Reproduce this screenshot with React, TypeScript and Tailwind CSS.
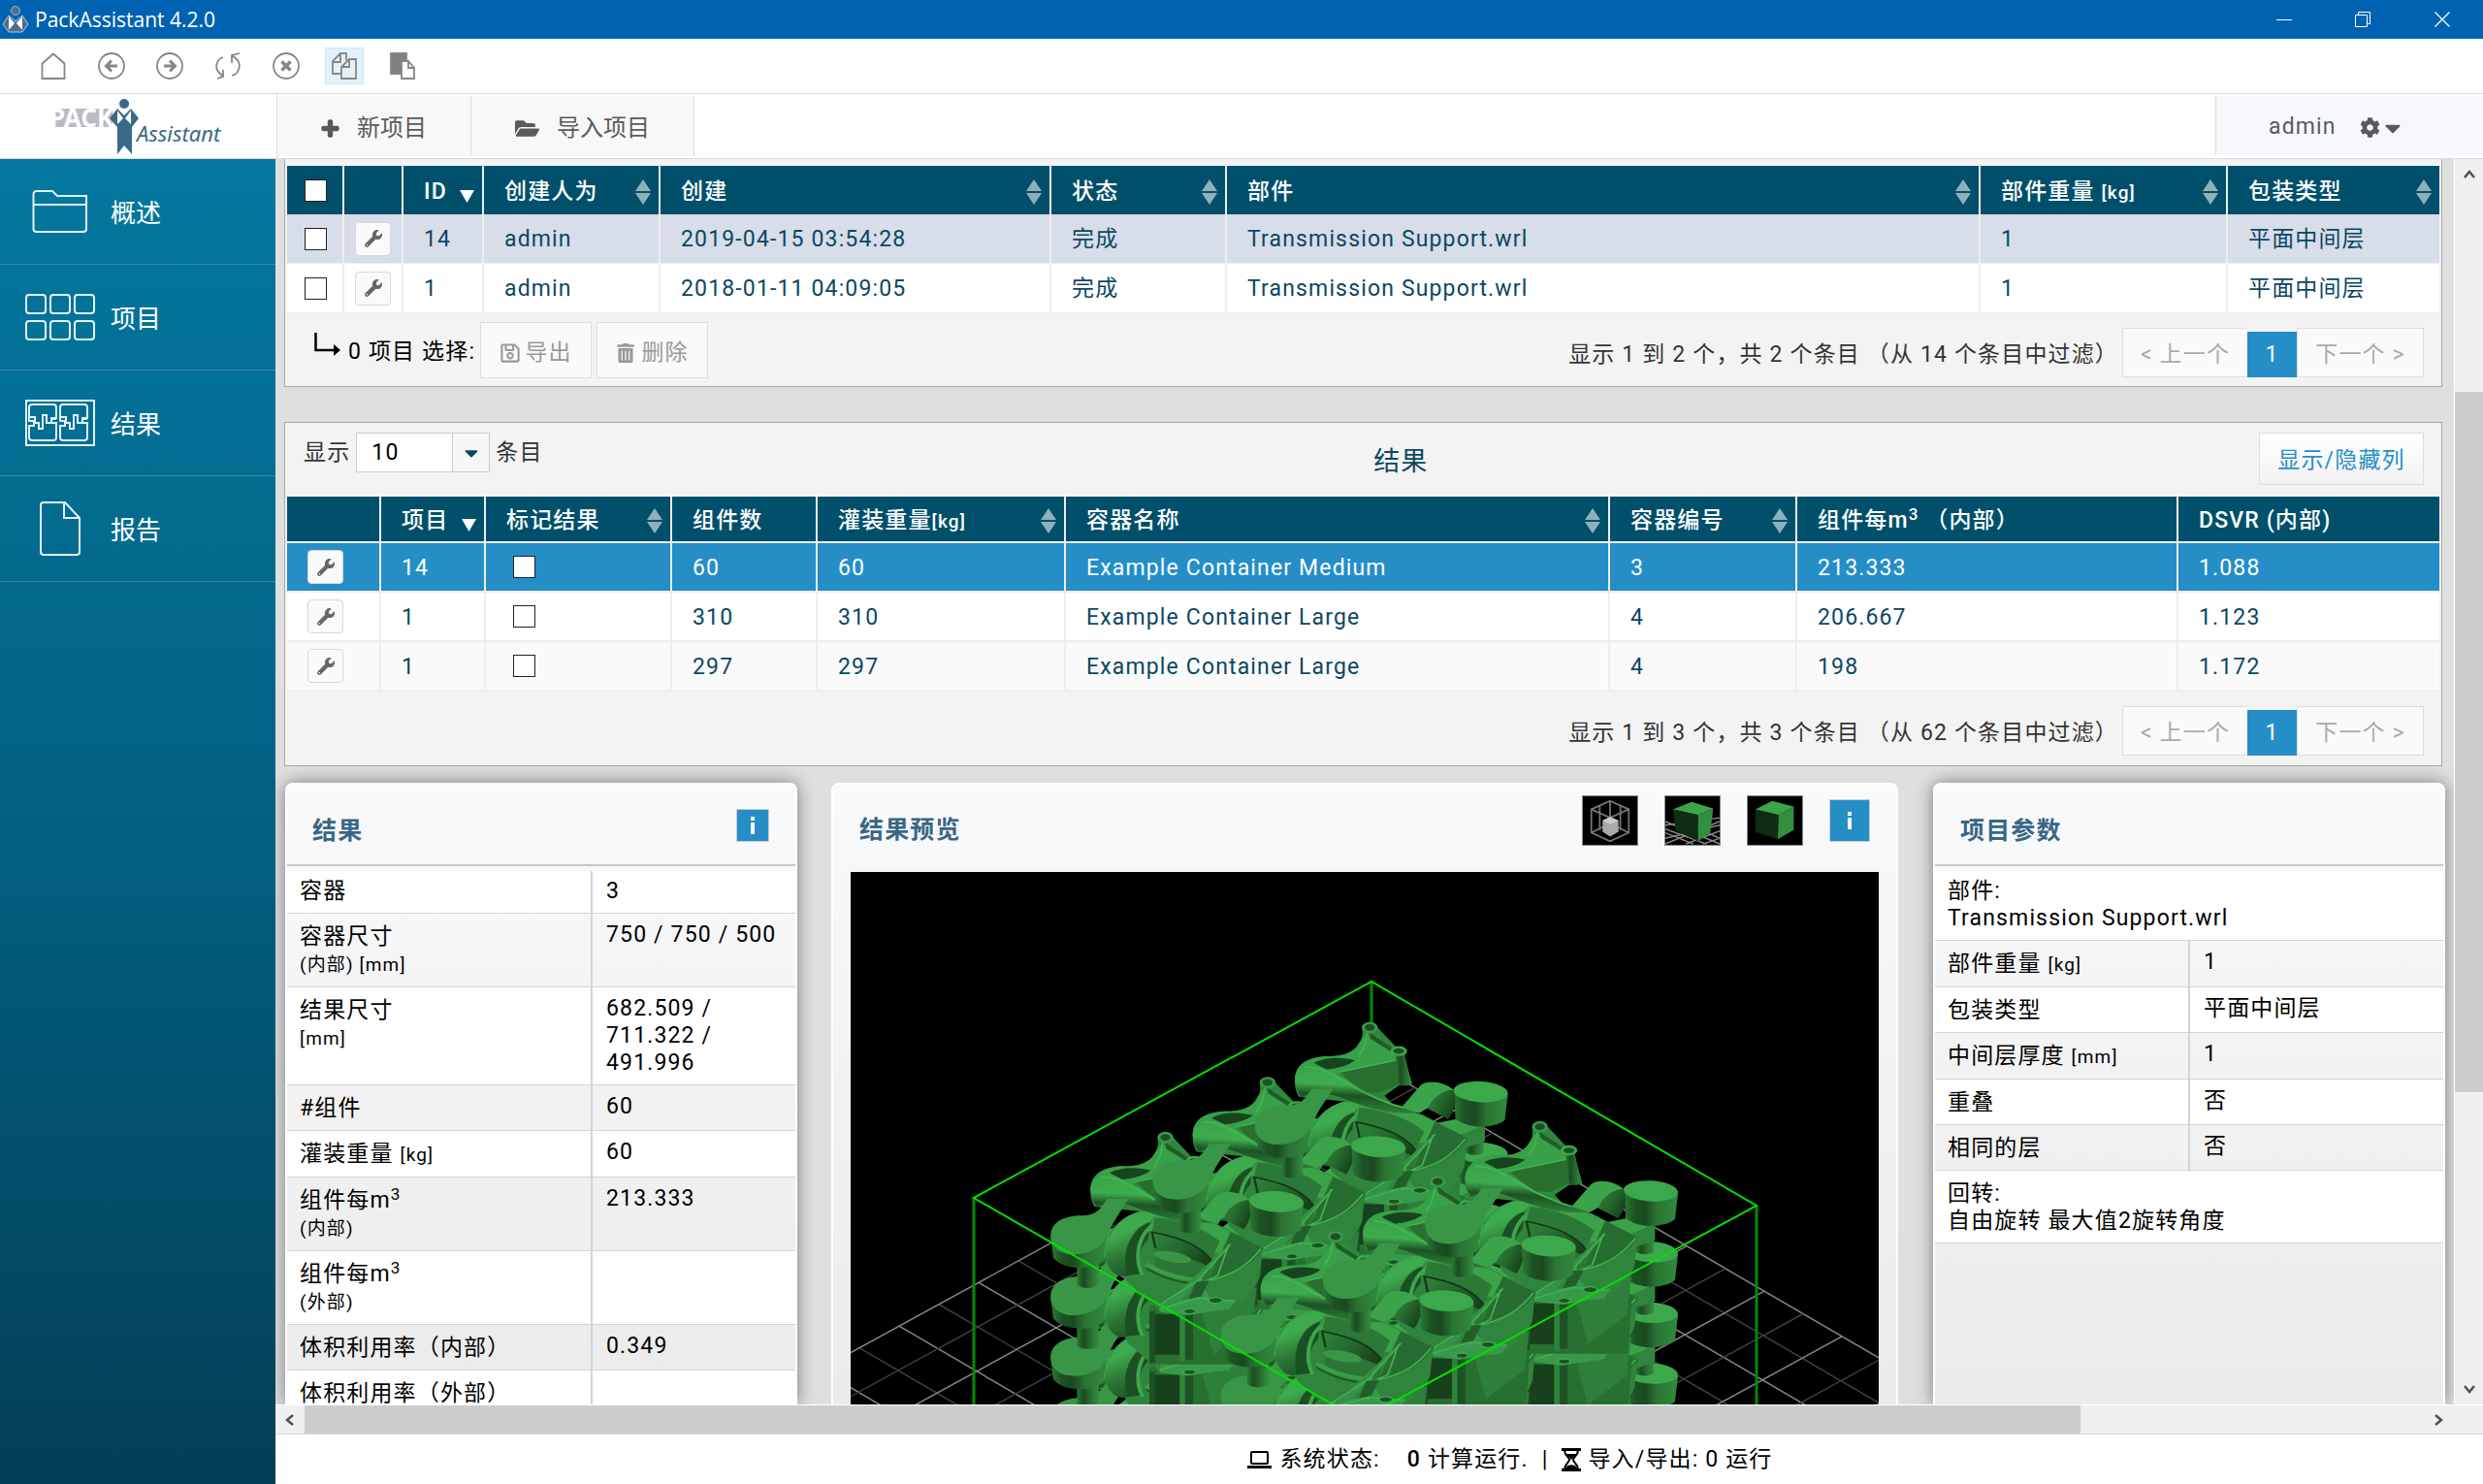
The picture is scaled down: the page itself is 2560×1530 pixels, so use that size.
import type { ReactNode } from "react";
import { FaWrench, FaPlus, FaFolderOpen, FaCog, FaCaretDown, FaRegSave, FaTrashAlt } from "react-icons/fa";

const FONT = "font-['Roboto','Noto_Sans_CJK_SC',sans-serif]";

/* ---------- window chrome ---------- */

function TitleBar() {
  return (
    <header className="flex h-10 shrink-0 items-center bg-[#0063b1] text-white">
      <svg viewBox="0 0 28 28" className="ml-0.5 h-7 w-7">
        <circle cx="14" cy="5" r="4.5" fill="#4e6f8e" stroke="#9db4c8" />
        <path d="M7 10 14 16l7-6 6 9-6 8H7l-6-8z" fill="#4e6f8e" stroke="#b9cad8" />
        <path d="M7 11v14l6-7zM21 11v14l-6-7z" fill="#fff" />
      </svg>
      <span className="ml-1.5 font-['Open_Sans',sans-serif] text-[21px] leading-7">PackAssistant 4.2.0</span>
      <div className="ml-auto flex h-full">
        <button aria-label="最小化" className="flex w-[81px] items-center justify-center">
          <svg width="16" height="16" viewBox="0 0 16 16" stroke="#fff"><path d="M0 8.500h16" /></svg>
        </button>
        <button aria-label="还原" className="flex w-[81px] items-center justify-center">
          <svg width="16" height="16" viewBox="0 0 16 16" stroke="#fff" fill="none"><path d="M.5 3.500h12v12H.5zM3.500 3.500v-3h12v12h-3" /></svg>
        </button>
        <button aria-label="关闭" className="flex w-[84px] items-center justify-center">
          <svg width="16" height="16" viewBox="0 0 16 16" stroke="#fff" strokeWidth="1.300"><path d="M.5.5l15 15M15.500.5l-15 15" /></svg>
        </button>
      </div>
    </header>
  );
}

const toolIcons: { label: string; active?: boolean; art: ReactNode }[] = [
  { label: "主页", art: <path d="M2.500 11.500 14 1.500l11.500 10V27h-23z" /> },
  { label: "后退", art: <><circle cx="14" cy="14" r="13" /><path d="M20 14H9M14 8.500 8.500 14l5.500 5.500" strokeWidth="3" /></> },
  { label: "前进", art: <><circle cx="14" cy="14" r="13" /><path d="M8 14h11M14 8.500l5.500 5.500-5.500 5.500" strokeWidth="3" /></> },
  { label: "刷新", art: <path d="M9 5C3 7 0 14 4 20l5 5M9 18v7l-6 2M18 24c8-2 10-12 5-17l-5-4M26 1l-8 2v8" /> },
  { label: "停止", art: <><circle cx="14" cy="14" r="13" /><path d="M9.500 9.500l9 9M18.500 9.500l-9 9" strokeWidth="3.500" /></> },
  { label: "复制", active: true, art: <path d="M11 22H2V9l8-8h6v7M2 10h8V1M11 27V15l8-8h7v20zM11 15h8V7" /> },
  { label: "粘贴", art: <><path d="M2 1h16v7h-5v14H2z" fill="#808080" /><path d="M13 9h7l6 7v11H13zM20 9v7h6" fill="#fff" /></> },
];

function ToolBar() {
  return (
    <nav className="flex h-[57px] shrink-0 items-center border-b border-[#d9d9d9] bg-white pl-[35px]">
      {toolIcons.map((t) => (
        <button
          key={t.label}
          aria-label={t.label}
          className={`mr-5 flex h-[38px] w-10 items-center justify-center ${t.active ? "border border-[#cbe6fa] bg-[#e3f1fc]" : ""}`}
        >
          <svg viewBox="0 0 28 28" className="h-7 w-7" fill="none" stroke="#868686" strokeWidth="1.800">{t.art}</svg>
        </button>
      ))}
    </nav>
  );
}

function Logo() {
  return (
    <div className="flex h-full w-[286px] items-center justify-center border-r border-[#dcdcdc] bg-white">
      <svg viewBox="0 0 180 60" className="h-[60px] w-[180px]" aria-label="PACK Assistant">
        <rect x="1" y="12" width="62" height="19" fill="#b9bcc6" />
        <text x="-2" y="31" fill="#fff" fontFamily="Noto Sans" fontWeight="700" fontSize="26">PACK</text>
        <circle cx="75" cy="7" r="5" fill="#3a6a87" />
        <path d="M68 12l7 7 7-7 8 10-7 9v28l-8-9-7 9V31l-8-9z" fill="#3a6a87" />
        <path d="M68 14v14l6-6zM82 14v14l-6-6z" fill="#fff" />
        <text x="88" y="46" fill="#3a6a87" fontFamily="Noto Sans" fontStyle="italic" fontSize="22">Assistant</text>
      </svg>
    </div>
  );
}

function HeaderBar() {
  return (
    <div className="flex h-[67px] shrink-0 items-start border-b border-[#d9d9d9] bg-white text-2xl text-[#5a5a5a]">
      <Logo />
      <button className="mt-0.5 flex h-[62px] w-[200px] items-center justify-center gap-[18px] border-r border-[#dcdcdc] bg-[#f8f8f8] pt-1">
        <FaPlus size={19} stroke="currentColor" strokeWidth="50" />新项目
      </button>
      <button className="mt-0.5 flex h-[62px] w-[230px] items-center justify-center gap-[18px] border-r border-[#dcdcdc] bg-[#f8f8f8] pt-1">
        <FaFolderOpen size={25} />导入项目
      </button>
      <button className="mt-0.5 ml-auto flex h-[61px] w-[276px] items-center border-l border-[#dcdcdc] bg-[#f6f8fc] pt-1 pl-[54px] text-[23px] tracking-wider">
        admin
        <FaCog size={21} className="ml-6" />
        <FaCaretDown size={26} />
      </button>
    </div>
  );
}

/* ---------- sidebar ---------- */

const piece = "M7 5h22a3 3 0 0 1 3 3v11h-5v5h5v15a3 3 0 0 1-3 3H7a3 3 0 0 1-3-3V27h5v-5H4V8a3 3 0 0 1 3-3z";
const zigzag = "M5 18h5v6h4v6h4V16h4v8h5v-4h5";
const sideItems: { label: string; icon: ReactNode }[] = [
  {
    label: "概述",
    icon: <svg width="58" height="44" viewBox="0 0 58 44"><path d="M1.500 40V4a3 3 0 0 1 3-3H21l5 5h30v34a3 3 0 0 1-3 3H4.500a3 3 0 0 1-3-3zM2 15h54" /></svg>,
  },
  {
    label: "项目",
    icon: (
      <svg width="72" height="48" viewBox="0 0 72 48">
        {[1, 26, 51].map((x) => [1, 28].map((y) => <rect key={`${x}-${y}`} x={x} y={y} width="20" height="19" rx="3" />))}
      </svg>
    ),
  },
  {
    label: "结果",
    icon: (
      <svg width="72" height="48" viewBox="0 0 72 48">
        <rect x="1" y="1" width="70" height="46" />
        <path d={piece} /><path d={piece} transform="translate(32 0)" />
        <path d={zigzag} /><path d={zigzag} transform="translate(32 0)" />
      </svg>
    ),
  },
  {
    label: "报告",
    icon: <svg width="42" height="56" viewBox="0 0 42 56"><path d="M1 52V4a3 3 0 0 1 3-3h22l15 16v35a3 3 0 0 1-3 3H4a3 3 0 0 1-3-3zM25 1v16h16" /></svg>,
  },
];

function SideBar() {
  return (
    <aside className="w-[284px] shrink-0 bg-gradient-to-b from-[#04789f] via-[#026183] to-[#033f56]">
      {sideItems.map((s) => (
        <a key={s.label} href="#" className="flex h-[109px] items-center border-b border-[#3a87a5] pl-[26px] text-[26px] text-white">
          <span className="flex w-[72px] justify-center [&_svg]:fill-none [&_svg]:stroke-[#e0f2f8] [&_svg]:stroke-2">{s.icon}</span>
          <span className="ml-4 pt-1">{s.label}</span>
        </a>
      ))}
    </aside>
  );
}

/* ---------- tables ---------- */

function Check({ label }: { label: string }) {
  return <input type="checkbox" aria-label={label} className="block h-[23px] w-[23px] appearance-none border border-[#222] bg-white" />;
}

function WrenchButton() {
  return (
    <button aria-label="操作" className="flex h-[35px] w-[37px] items-center justify-center rounded border border-[#d8d8d8] bg-[#fafafa] text-[#666]">
      <FaWrench size={18} />
    </button>
  );
}

function SortArrows() {
  return (
    <svg width="16" height="26" viewBox="0 0 16 26" fill="#8fb0bb" className="shrink-0"><path d="M8 0l8 12H0zM8 26l8-12H0z" /></svg>
  );
}

type Col = { title: ReactNode; width: string; sort?: "both" | "desc" };

function HeadCell({ col }: { col: Col }) {
  return (
    <th scope="col" className="border-r-2 border-[#eee] bg-[#00506b] pt-1 pr-2 pb-0 pl-[21px] text-left font-medium text-white last:border-r-0">
      <span className="flex items-center justify-between whitespace-nowrap">
        <span>{col.title}</span>
        {col.sort === "both" && <SortArrows />}
        {col.sort === "desc" && <svg width="15" height="13" viewBox="0 0 15 13" className="mt-2 shrink-0" fill="#fff"><path d="M0 0h15L7.500 13z" /></svg>}
      </span>
    </th>
  );
}

const unit = (s: string) => <span className="text-[19px]">{s}</span>;

const projectCols: Col[] = [
  { title: <Check label="全选" />, width: "w-[59px]" },
  { title: "", width: "w-[61px]" },
  { title: "ID", width: "w-[83px]", sort: "desc" },
  { title: "创建人为", width: "w-[182px]", sort: "both" },
  { title: "创建", width: "w-[403px]", sort: "both" },
  { title: "状态", width: "w-[181px]", sort: "both" },
  { title: "部件", width: "w-auto", sort: "both" },
  { title: <>部件重量 {unit("[kg]")}</>, width: "w-[255px]", sort: "both" },
  { title: "包装类型", width: "w-[218px]", sort: "both" },
];

const projects = [
  ["14", "admin", "2019-04-15 03:54:28", "完成", "Transmission Support.wrl", "1", "平面中间层"],
  ["1", "admin", "2018-01-11 04:09:05", "完成", "Transmission Support.wrl", "1", "平面中间层"],
];

function Pager({ text }: { text: string }) {
  return (
    <div className="flex items-center text-[#333]">
      <span className="mr-1 pt-1 whitespace-nowrap">{text}</span>
      <button className="h-[51px] w-[129px] border border-r-0 border-[#ddd] bg-[#fafafa] pt-1 text-[#aaa]">&lt; 上一个</button>
      <button className="mt-1 h-[47px] w-[51px] bg-[#258ec7] text-white">1</button>
      <button className="h-[51px] w-[131px] border border-[#ddd] bg-[#fafafa] pt-1 text-[#aaa]">下一个 &gt;</button>
    </div>
  );
}

const cell = "border-r-2 border-[#eee] pl-[21px] pt-0.5 pb-0 last:border-r-0";

function ProjectPanel() {
  return (
    <section className="border border-t-0 border-[#a9a9a9] bg-[#f3f3f3] px-0.5 pt-[7px] pb-2">
      <table className="w-full table-fixed border-separate border-spacing-0 text-[#0c4763]">
        <colgroup>{projectCols.map((c, i) => <col key={i} className={c.width} />)}</colgroup>
        <thead>
          <tr className="h-[50px]">
            {projectCols.map((c, i) =>
              i === 0 ? (
                <th key={i} scope="col" className="border-r-2 border-[#eee] bg-[#00506b] p-0 pl-[18px]">{c.title}</th>
              ) : (
                <HeadCell key={i} col={c} />
              ),
            )}
          </tr>
        </thead>
        <tbody>
          {projects.map((p, i) => (
            <tr key={i} className={`h-[51px] ${i === 0 ? "bg-[#d7dde9]" : "bg-white"}`}>
              <td className="border-r-2 border-b border-[#eee] p-0 pl-[18px]"><Check label={`选择 ${p[0]}`} /></td>
              <td className="border-r-2 border-b border-[#eee] p-0 pl-[11px]"><WrenchButton /></td>
              {p.map((v, k) => <td key={k} className={`${cell} border-b`}>{v}</td>)}
            </tr>
          ))}
        </tbody>
      </table>
      <div className="flex items-start pt-[9px] pr-4 pl-7">
        <div className="flex items-center">
          <svg width="28" height="26" viewBox="0 0 28 26" className="mb-3" fill="none" stroke="#000" strokeWidth="2.500"><path d="M1.500 1v18H22" /><path d="M20 13l7 6-7 6z" fill="#000" stroke="none" /></svg>
          <span className="mr-[5px] ml-[7px] pt-1 text-black">0 项目 选择:</span>
          <button className="flex h-[58px] w-[115px] items-center justify-center gap-1 border border-[#ddd] bg-[#fafafa] pt-1.5 text-[#999]"><FaRegSave size={22} />导出</button>
          <button className="ml-[5px] flex h-[58px] w-[115px] items-center justify-center gap-1.5 border border-[#ddd] bg-[#fafafa] pt-1.5 text-[#999]"><FaTrashAlt size={20} />删除</button>
        </div>
        <div className="mt-1.5 ml-auto"><Pager text="显示 1 到 2 个，共 2 个条目 （从 14 个条目中过滤）" /></div>
      </div>
    </section>
  );
}

const resultCols: Col[] = [
  { title: "", width: "w-[97px]" },
  { title: "项目", width: "w-[108px]", sort: "desc" },
  { title: "标记结果", width: "w-[192px]", sort: "both" },
  { title: "组件数", width: "w-[150px]" },
  { title: <>灌装重量{unit("[kg]")}</>, width: "w-[256px]", sort: "both" },
  { title: "容器名称", width: "w-auto", sort: "both" },
  { title: "容器编号", width: "w-[193px]", sort: "both" },
  { title: <>组件每m<sup className="text-[17px]">3</sup> （内部）</>, width: "w-[393px]" },
  { title: "DSVR (内部)", width: "w-[269px]" },
];

const results = [
  ["14", "60", "60", "Example Container Medium", "3", "213.333", "1.088"],
  ["1", "310", "310", "Example Container Large", "4", "206.667", "1.123"],
  ["1", "297", "297", "Example Container Large", "4", "198", "1.172"],
];
const resultRowStyles = ["bg-[#258ec7] text-white", "bg-white text-[#0c4763]", "bg-[#fafafa] text-[#0c4763]"];

function ResultPanel() {
  return (
    <section className="mt-9 border border-[#a9a9a9] bg-[#f3f3f3] px-0.5 pt-2.5 pb-2.5">
      <div className="flex h-[66px] items-start pr-4 pl-[17px]">
        <label htmlFor="count" className="leading-[42px] text-[#333]">显示</label>
        <span className="relative mx-1.5 flex">
          <select id="count" className="h-[41px] w-[138px] appearance-none border border-[#ccc] bg-white pl-[15px] text-black">
            <option>10</option>
          </select>
          <span className="pointer-events-none absolute top-px right-px bottom-px flex w-[38px] items-center justify-center border-l border-[#ccc] bg-[#f7f7f7] text-[#0c4763]">
            <FaCaretDown size={22} />
          </span>
        </span>
        <span className="leading-[42px] text-[#333]">条目</span>
        <h2 className="flex-1 text-center text-[27px] leading-[60px] text-[#0c4763]">结果</h2>
        <button className="h-[54px] w-[170px] border border-[#ddd] bg-gradient-to-b from-white to-[#f2f2f2] pt-1 text-[#258ec7]">显示/隐藏列</button>
      </div>
      <table className="w-full table-fixed border-separate border-spacing-0">
        <colgroup>{resultCols.map((c, i) => <col key={i} className={c.width} />)}</colgroup>
        <thead>
          <tr className="h-[46px]">{resultCols.map((c, i) => <HeadCell key={i} col={c} />)}</tr>
        </thead>
        <tbody>
          {results.map((r, i) => (
            <tr key={i} className={`h-[51px] ${resultRowStyles[i]}`}>
              <td className="border-t-2 border-r-2 border-[#eee] p-0 pl-[21px]"><WrenchButton /></td>
              <td className={`${cell} border-t-2`}>{r[0]}</td>
              <td className="border-t-2 border-r-2 border-[#eee] p-0 pl-7"><Check label={`标记 ${r[3]} ${r[1]}`} /></td>
              {r.slice(1).map((v, k) => <td key={k} className={`${cell} border-t-2`}>{v}</td>)}
            </tr>
          ))}
        </tbody>
      </table>
      <div className="flex justify-end border-t-2 border-[#eee] pt-[15px] pr-4"><Pager text="显示 1 到 3 个，共 3 个条目 （从 62 个条目中过滤）" /></div>
    </section>
  );
}

/* ---------- cards ---------- */

function InfoButton({ className }: { className: string }) {
  return (
    <button aria-label="信息" className={`flex items-center justify-center border border-[#ccc] bg-[#258ec7] ${className}`}>
      <svg width="6" height="18" viewBox="0 0 6 18" fill="#fff"><path d="M1 0h4v4H1zM1 6h4v12H1z" /></svg>
    </button>
  );
}

const cardBase = "border-2 border-b-0 border-white rounded-t-lg bg-gradient-to-b from-[#f9fafc] via-[#f2f2f2] to-[#ebebeb]";
const m3 = <>组件每m<sup className="text-[17px]">3</sup></>;
const small = (s: string) => <span className="text-[19px]">{s}</span>;

const resultRows: [ReactNode, ReactNode][] = [
  ["容器", "3"],
  [<>容器尺寸<br />{small("(内部) [mm]")}</>, "750 / 750 / 500"],
  [<>结果尺寸<br />{small("[mm]")}</>, <>682.509 /<br />711.322 /<br />491.996</>],
  ["#组件", "60"],
  [<>灌装重量 {small("[kg]")}</>, "60"],
  [<>{m3}<br />{small("(内部)")}</>, "213.333"],
  [<>{m3}<br />{small("(外部)")}</>, ""],
  ["体积利用率（内部）", "0.349"],
  ["体积利用率（外部）", ""],
];

const paramRows: [ReactNode, ReactNode?][] = [
  [<>部件:<br />Transmission Support.wrl</>],
  [<>部件重量 {small("[kg]")}</>, "1"],
  ["包装类型", "平面中间层"],
  [<>中间层厚度 {small("[mm]")}</>, "1"],
  ["重叠", "否"],
  ["相同的层", "否"],
  [<>回转:<br />自由旋转 最大值2旋转角度</>],
];

function PropertyCard({ title, rows, info, split }: { title: string; rows: [ReactNode, ReactNode?][]; info?: boolean; split: string }) {
  return (
    <section className={`w-[528px] shrink-0 shadow-[0_0_18px_rgba(0,0,0,0.45)] ${cardBase}`}>
      <div className="flex h-[84px] items-center border-b-2 border-[#c5c9c5] pr-[27px] pl-[26px]">
        <h3 className="mt-3.5 text-[25px] font-bold text-[#386785]">{title}</h3>
        {info && <InfoButton className="mt-0.5 ml-auto h-[34px] w-[34px]" />}
      </div>
      <table className="mt-[5px] w-full table-fixed border-separate border-spacing-0 text-black">
        <colgroup><col className={split} /><col /></colgroup>
        <tbody>
          {rows.map(([k, v], i) => (
            <tr key={i} className="align-top odd:bg-white first:[&>*]:pt-[7px]">
              <th
                scope="row"
                colSpan={v === undefined ? 2 : 1}
                className={`border-b border-[#d4d4d4] pt-2.5 pr-2 pb-2 pl-[13px] text-left leading-7 font-normal ${v === undefined ? "" : "border-r-2"}`}
              >
                {k}
              </th>
              {v !== undefined && <td className="border-b border-[#d4d4d4] pt-2 pb-2 pl-3.5 leading-7">{v}</td>}
            </tr>
          ))}
        </tbody>
      </table>
    </section>
  );
}

/* ---------- 3D preview ---------- */

function Frame() {
  return (
    <>
      <path d="M752 700h250l-10 180H752z" fill="#28702f" />
      <path d="M762 725h60v125h-60z" fill="#17401c" />
      <path d="M752 715h14v160h-14zM835 715h18v150h-18z" fill="#1c5224" />
      <path d="M822 712h12v160h-12z" fill="#35914290" />
      <path d="M870 700l130-60-10 120-90 90z" fill="#2e7f3a" />
      <path d="M655 500C665 440 715 395 775 402l135 45 105 73-13 100-60 95-165 0-75-90z" fill="#2f853b" />
      {/* strap loop on the left */}
      <path d="M650 545C652 460 700 396 775 402l-22 38c-38 10-62 70-52 165-20 10-45-10-51-60z" fill="url(#strap)" />
      <path d="M700 605c-12-70 5-140 53-165l-4 55c-20 20-25 70-14 105z" fill="#1b5022" />
      <path d="M736 604c-20-55-10-125 28-160" fill="none" stroke="#3da54c" strokeWidth="9" />
      {/* rail with its recess */}
      <path d="M770 402l135 45 110 73-40 22-90-10-135-65z" fill="#3ba24a" />
      <path d="M765 425c60 8 115 35 150 75l-20 55-140-65z" fill="#2c7937" />
      <path d="M757 470c65 12 118 42 140 92l-10 30-125-62z" fill="url(#hole)" />
      <path d="M755 470c70 18 115 42 140 88M758 470l8 50" fill="none" stroke="#14391a" strokeWidth="5" />
      <path d="M765 520c50 30 80 25 130 60l-10 60-120-50z" fill="#2b7636" />
      <ellipse cx="805" cy="548" rx="45" ry="16" transform="rotate(14 805 548)" fill="#389646" />
      <path d="M745 570c45 35 80 45 130 50" fill="none" stroke="#3a9d48" strokeWidth="12" />
      <path d="M745 583c45 35 80 45 130 50" fill="none" stroke="#1c5224" strokeWidth="5" />
      {/* ribbed wedge on the right */}
      <path d="M940 470l75 50-15 95-60 95-75-25z" fill="#276c30" />
      <path d="M1013 525c-30 60-70 75-140 100l-15 60 90 15c35-30 55-70 60-95z" fill="#2f853c" />
      <path d="M780 690l60-12 40-30 20 40 50-10-10 30-100 20-65-10z" fill="#38994a" />
      <path d="M935 510l-70 112-40 60-45 22 60-75z" fill="#359246" />
      <path d="M940 508l-75 112-85 72M935 510l-25 95-50 30M1010 522c-30 50-60 80-125 100l-22 60M775 710l90-35 85 10" fill="none" stroke="#42b250" strokeWidth="4" />
      <path d="M860 625l30-5-18 50-30 8z" fill="#22602b" />
      <ellipse cx="845" cy="716" rx="14" ry="8" fill="#1c5224" stroke="#3ca84c" strokeWidth="4" />
      <ellipse cx="905" cy="682" rx="16" ry="9" fill="#1c5224" stroke="#3ca84c" strokeWidth="4" />
    </>
  );
}

function Cylinder({ post }: { post: boolean }) {
  return (
    <>
      {post && (
        <>
          <path d="M1010 520h42v45c-12 10-30 10-42 0z" fill="url(#cyl)" />
          <path d="M935 480l70-18 50 20v48l-55 25z" fill="#2f853b" />
          <path d="M920 480l80-22 38 30-40 22 20 10-30 8z" fill="#3ba24a" />
        </>
      )}
      <path d="M983 375l4 85c25 32 90 32 114 4l7-80z" fill="url(#drum)" />
      <ellipse cx="1045" cy="377" rx="63" ry="32" transform="rotate(5 1045 377)" fill="#3ca84c" />
    </>
  );
}

function Horn() {
  return (
    <>
      <path d="M616 345c0-50 24-74 74-78 30 2 60-8 72-35 12-20 10-35 10-55h34l50 70 12 8 18 100-30 3-36 34-50 20-145-20c-6-12-9-30-9-47z" fill="#2f873c" />
      <path d="M616 345c0-50 24-74 74-78 30 2 60-8 72-35l14-30 30 3 42 50 2 30-150 40-50-20z" fill="#38a048" />
      <path d="M660 288c25-20 70-18 95-8-15 15-40 25-65 28z" fill="#17441d" />
      <path d="M720 315l130-35 12 70-50 30-45-2z" fill="#29702f" />
      <path d="M720 315l130-36" fill="none" stroke="#43b452" strokeWidth="4" />
      <path d="M848 256l17-2 22 98c-8 8-24 8-30 2z" fill="url(#cyl)" />
      <path d="M790 195l62 55-12 4-50-42z" fill="#1f5c28" />
      <path d="M783 195l-6 40-15 35" fill="none" stroke="#43b452" strokeWidth="4" />
      <ellipse cx="789" cy="178" rx="15" ry="14" fill="#1b5022" stroke="#37994a" strokeWidth="7" />
      <ellipse cx="856" cy="251" rx="16" ry="12" fill="#1b5022" stroke="#3ca84c" strokeWidth="7" />
      {/* long arm running from the lobe to the strap */}
      <path d="M622 310c40-30 90 10 120 35 45 40 85 76 125 78l35-5 8 22c-70 12-125-12-190-46-50-25-72-8-90 0-14-30-18-56-8-84z" fill="url(#arm)" />
      <path d="M640 300c60 0 90 60 180 105 30 18 55 25 90 24" fill="none" stroke="#44b553" strokeWidth="5" />
      <path d="M862 425l46-70c15-16 55-10 76 18-24-4-44 22-58 52l-24 18z" fill="#3ba34a" />
      <path d="M924 430c5-30 30-56 58-58 10 30 4 62-12 90z" fill="url(#hole)" />
    </>
  );
}

function Disk() {
  return (
    <>
      <path d="M585 560h50v75c-14 12-36 12-50 0z" fill="url(#cyl)" />
      <path d="M524 485l6 65c25 40 90 40 115 10l10-80z" fill="url(#drum)" />
      <path d="M524 482c0-40 30-62 70-62 35 0 45-20 60-52h50l-30 62c-14 30-14 45-24 65-30 60-126 65-126-13z" fill="#389646" />
    </>
  );
}

const layers = [4, 3, 2, 1, 0];
const bays = [0, 1];
const slots = [0, 1, 2];
const at = (i: number, j: number, l: number) => `translate(${i * -236 + j * 393} ${i * 170 + j * 307 + l * 188})`;

function Preview() {
  return (
    <svg viewBox="0 0 1060 549" preserveAspectRatio="xMidYMin slice" className="block h-full w-full bg-black" role="img" aria-label="结果预览">
      <defs>
        <linearGradient id="cyl"><stop offset="0" stopColor="#2b7a36" /><stop offset=".3" stopColor="#1a4c20" /><stop offset=".6" stopColor="#286b31" /><stop offset="1" stopColor="#33903f" /></linearGradient>
        <linearGradient id="drum"><stop offset="0" stopColor="#2b7a36" /><stop offset=".2" stopColor="#1c5323" /><stop offset=".4" stopColor="#1a4a20" /><stop offset=".6" stopColor="#2a7334" /><stop offset="1" stopColor="#318b3d" /></linearGradient>
        <linearGradient id="strap" x2=".3" y2="1"><stop offset="0" stopColor="#3aa149" /><stop offset=".4" stopColor="#3eac4e" /><stop offset=".75" stopColor="#2a7534" /><stop offset="1" stopColor="#1f5a28" /></linearGradient>
        <linearGradient id="hole" x2="1" y2=".6"><stop offset="0" stopColor="#2f853c" /><stop offset=".5" stopColor="#266a2e" /><stop offset="1" stopColor="#174219" /></linearGradient>
        <linearGradient id="arm" x1=".5" x2=".35" y2="1"><stop offset="0" stopColor="#3aa149" /><stop offset=".4" stopColor="#3eac4e" /><stop offset=".62" stopColor="#1c5224" /><stop offset="1" stopColor="#2f893c" /></linearGradient>
      </defs>
      <g strokeWidth="1.500">
        {Array.from({ length: 15 }, (_, k) => {
          const x = -32 + k * 41;
          const y = 495 - 0.547 * (x - 1);
          return <path key={`b${k}`} d={`M${x} ${y}l700 408`} stroke={k % 2 ? "#3f3f3f" : "#858585"} />;
        })}
        {Array.from({ length: 20 }, (_, k) => {
          const x = 542 + k * 40;
          const y = 199 + 0.583 * (x - 542);
          return <path key={`a${k}`} d={`M${x} ${y}l-700 383`} stroke={k % 2 ? "#3f3f3f" : "#858585"} />;
        })}
      </g>
      <path d="M537 113v100" stroke="#008a00" strokeWidth="3" />
      <g transform="translate(183 101) scale(.4464 .3333)">
        {layers.map((l) =>
          bays.map((j) => (
            <g key={`${l}-${j}`}>
              {slots.map((i) => (
                <g key={i}>
                  <g transform={at(i, j, l)}><Cylinder post={i === 0} /><Frame /><Horn /></g>
                  {i > 0 && (
                    <>
                      <g transform={at(i, j, l)}><Cylinder post={false} /></g>
                      <g transform={at(i - 1, j, l)}><Disk /></g>
                    </>
                  )}
                </g>
              ))}
              <g transform={at(2, j, l)}><Disk /></g>
            </g>
          )),
        )}
      </g>
      <path d="M127 336v320M934 344v320" stroke="#008a00" strokeWidth="3" />
      <path d="M127 336L537 113 934 344 525 565z" fill="none" stroke="#00e000" strokeWidth="2" />
    </svg>
  );
}

function WireCube() {
  return (
    <svg viewBox="0 0 58 50" className="h-full w-full" fill="none" stroke="#777" strokeWidth="1.800">
      <path d="M29 4l20 9v25l-20 9-20-9V13zM29 4v18M9 13l20 9 20-9M18 9v26M40 9v26M9 38l20-10 20 10" />
      <path d="M21 25l8-4 9 4v12l-9 5-8-5z" fill="#aaa" stroke="none" />
      <path d="M21 25l8 4 9-4-9-4z" fill="#ccc" stroke="none" />
    </svg>
  );
}

function SolidCube({ floor }: { floor?: boolean }) {
  return (
    <svg viewBox="0 0 58 50" className="h-full w-full">
      {floor ? (
        <>
          <path d="M0 26l58 24M0 38l30 12M0 30L58 22M0 50L58 26M22 50L58 36M0 44L58 30M14 24l44 20M40 50l18-6M0 34l44 16" stroke="#8a8a8a" strokeWidth="1.500" />
          <path d="M8 13L28 5l23 7-16 7z" fill="#3ba54a" />
          <path d="M8 13l27 6v28L11 36z" fill="#102c14" />
          <path d="M35 19l16-7-3 26-13 9z" fill="#338f40" />
        </>
      ) : (
        <>
          <path d="M8 13L26 4l23 6-16 9z" fill="#3ba54a" />
          <path d="M8 13l25 6-1 26-24-8z" fill="#102c14" />
          <path d="M33 19l16-9v25l-17 10z" fill="#338f40" />
        </>
      )}
    </svg>
  );
}

function PreviewCard() {
  const thumb = "h-[52px] w-[58px] border border-[#888] bg-black";
  return (
    <section className={`mr-9 ml-[35px] flex min-w-0 flex-1 flex-col ${cardBase}`}>
      <div className="flex h-[90px] shrink-0 items-start pt-[11px] pr-[27px] pl-[27px]">
        <h3 className="mt-[17px] text-[25px] leading-[38px] font-bold text-[#386785]">结果预览</h3>
        <div className="ml-auto flex items-center gap-[27px]">
          <button aria-label="线框" className={thumb}><WireCube /></button>
          <button aria-label="透视" className={thumb}><SolidCube floor /></button>
          <button aria-label="正交" className={thumb}><SolidCube /></button>
          <InfoButton className="h-[44px] w-[42px]" />
        </div>
      </div>
      <div className="mx-[18px] min-h-0 flex-1 overflow-hidden"><Preview /></div>
    </section>
  );
}

/* ---------- scroll bars and status ---------- */

function Chevron({ d }: { d: string }) {
  return <svg width="12" height="12" viewBox="0 0 12 12" fill="none" stroke="#505050" strokeWidth="2.500"><path d={d} /></svg>;
}

function StatusBar() {
  return (
    <footer className="flex h-[52px] shrink-0 items-center justify-center border-t border-[#d9d9d9] bg-white pl-[270px] text-black">
      <svg width="25" height="20" viewBox="0 0 25 20" fill="none" stroke="#000" strokeWidth="2"><rect x="4" y="2" width="17" height="12" rx="1" /><path d="M0 17.500h25" strokeWidth="3" /></svg>
      <span className="ml-2">系统状态:</span>
      <span className="ml-7"><b className="font-medium">0</b> 计算运行.</span>
      <span className="mx-3.5">|</span>
      <svg width="20" height="24" viewBox="0 0 20 24" fill="none" stroke="#000" strokeWidth="2"><path d="M0 1.500h20M0 22.500h20" strokeWidth="3" /><path d="M3 2c0 6 5 7 5 10s-5 4-5 10M17 2c0 6-5 7-5 10s5 4 5 10" /><path d="M5 6h10l-5 6zM4 21c1-5 11-5 12 0z" fill="#000" stroke="none" /></svg>
      <span className="ml-[7px]">导入/导出: 0 运行</span>
    </footer>
  );
}

export default function App() {
  return (
    <div className={`flex h-screen flex-col overflow-hidden bg-white text-[23px] leading-7 ${FONT}`}>
      <TitleBar />
      <ToolBar />
      <HeaderBar />
      <div className="flex min-h-0 flex-1">
        <SideBar />
        <div className="flex min-w-0 flex-1 flex-col tracking-wider">
          <div className="flex min-h-0 flex-1">
            <main className="flex min-w-0 flex-1 flex-col overflow-hidden bg-[#dfdfdf]">
              <div className="mr-3 ml-[9px]">
                <ProjectPanel />
                <ResultPanel />
              </div>
              <div className="mt-[17px] mr-[9px] ml-2.5 flex min-h-0 flex-1">
                <PropertyCard title="结果" rows={resultRows} info split="w-[315px]" />
                <PreviewCard />
                <PropertyCard title="项目参数" rows={paramRows} split="w-[263px]" />
              </div>
            </main>
            <div className="flex w-[30px] shrink-0 flex-col items-center border-l border-white bg-[#f0f0f0]">
              <div className="flex h-8 items-center"><Chevron d="M1 9l5-6 5 6" /></div>
              <div className="flex w-full flex-1 flex-col">
                <div className="grow-[208]" />
                <div className="grow-[722] bg-[#cdcdcd]" />
                <div className="grow-[290]" />
              </div>
              <div className="flex h-8 items-center"><Chevron d="M1 3l5 6 5-6" /></div>
            </div>
          </div>
          <div className="flex h-[30px] shrink-0 items-center border-t border-white bg-[#f0f0f0]">
            <div className="flex w-[30px] justify-center"><Chevron d="M9 1L3 6l6 5" /></div>
            <div className="flex h-full flex-1">
              <div className="grow-[1831] bg-[#cdcdcd]" />
              <div className="grow-[363]" />
            </div>
            <div className="flex w-[52px] justify-start"><Chevron d="M3 1l6 5-6 5" /></div>
          </div>
          <StatusBar />
        </div>
      </div>
    </div>
  );
}
